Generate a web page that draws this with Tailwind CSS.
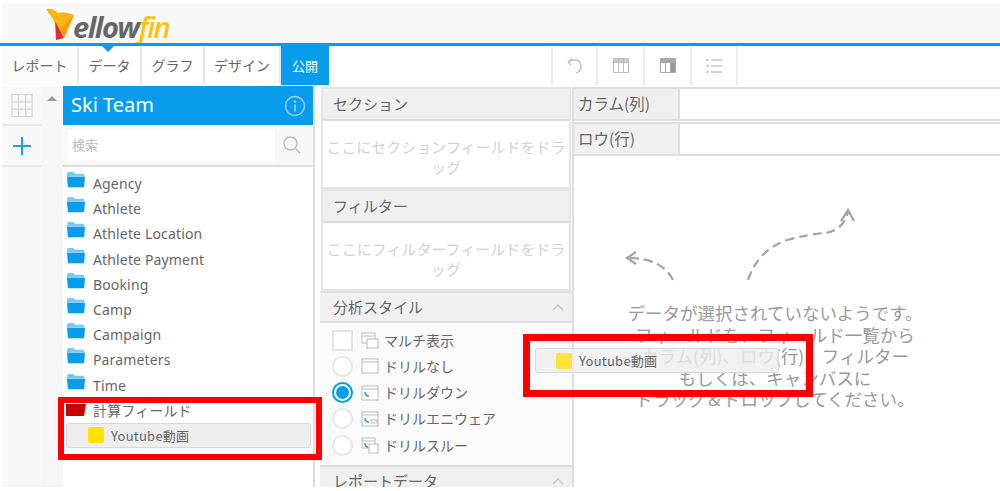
<!DOCTYPE html>
<html lang="ja">
<head>
<meta charset="UTF-8">
<title>Yellowfin</title>
<script src="https://cdn.jsdelivr.net/npm/@tailwindcss/browser@4"></script>
</head>
<body class="bg-white">
<div class="relative w-[1000px] h-[491px] overflow-hidden font-['Noto_Sans_CJK_JP','Noto_Sans',sans-serif] text-[#666]">

  <!-- logo bar -->
  <div class="h-[46px] pt-[3px] bg-white">
    <div class="h-10 ml-[2px] bg-[#f8f8f8] flex items-center pl-[43px]">
      <svg width="32" height="33" viewBox="0 0 32 33" class="mt-[3px]">
        <path d="M1 1 Q8 0 13 5 Q20 3 29 7 L19 30 L15 22 Z" fill="#fbb416"/>
        <path d="M10 13 L15 22 L19 30 L11 32 Z" fill="#e02b3c"/>
        <path d="M29 7 L19 30 L15 22 Z" fill="#f39c12"/>
      </svg>
      <span class="ml-[-4px] mt-[6px] text-[29px] leading-none italic font-bold tracking-[-1.5px] font-['Open_Sans',sans-serif]"><span class="text-[#666]">ellow</span><span class="text-[#fcc30b] font-semibold">fin</span></span>
    </div>
  </div>

  <!-- nav -->
  <div class="relative h-[39px] border-t-[3px] border-[#0a9cec] -mt-[3px] flex text-[14px] box-content">
    <div class="absolute left-[102px] top-0 w-0 h-0 border-x-[6px] border-x-transparent border-t-[6px] border-t-[#0a9cec]"></div>
    <div class="w-[77px] ml-[2px] flex items-center justify-center border-r-2 border-[#e6e6e6] bg-[#fbfbfb]">レポート</div>
    <div class="w-[63px] flex items-center justify-center border-r-2 border-[#e6e6e6]">データ</div>
    <div class="w-[63px] flex items-center justify-center border-r-2 border-[#e6e6e6]">グラフ</div>
    <div class="w-[76px] flex items-center justify-center border-r-2 border-[#e6e6e6]">デザイン</div>
    <div class="w-[48px] flex items-center justify-center bg-[#0a9cec] text-white text-[13px]">公開</div>
    <div class="ml-[222px] flex">
      <div class="w-[47px] flex items-center justify-center border-x-2 border-[#ececec]">
        <svg width="18" height="18" viewBox="0 0 18 18" fill="none" stroke="#c4c4c4" stroke-width="1.5"><path d="M2 5 Q5 3 10 3 Q15 4 15 9 Q15 14 10 16"/><path d="M2 5 L6 1.500 M2 5 L5 8"/></svg>
      </div>
      <div class="w-[47px] flex items-center justify-center border-r-2 border-[#ececec]">
        <svg width="18" height="17" viewBox="0 0 18 17" fill="none" stroke="#bdbdbd"><rect x="1.500" y="1.500" width="15" height="14"/><rect x="1.500" y="1.500" width="15" height="4" fill="#ccc"/><path d="M6.500 1.500V15.500M11.500 1.500V15.500"/></svg>
      </div>
      <div class="w-[47px] flex items-center justify-center border-r-2 border-[#ececec]">
        <svg width="18" height="17" viewBox="0 0 18 17" fill="none" stroke="#a8a8a8"><rect x="1.500" y="1.500" width="15" height="14"/><rect x="1.500" y="1.500" width="15" height="4" fill="#aaa"/><rect x="6.500" y="5.500" width="5" height="10" fill="#fff"/><rect x="11.500" y="5.500" width="5" height="10" fill="#999"/></svg>
      </div>
      <div class="w-[46px] flex items-center justify-center border-r-2 border-[#ececec]">
        <svg width="18" height="16" viewBox="0 0 18 16" fill="none" stroke="#c4c4c4" stroke-width="1.300"><path d="M1 2h3M1 8h3M1 14h3M6 2h11M6 8h11M6 14h11"/></svg>
      </div>
    </div>
  </div>

  <!-- main -->
  <div class="flex h-[401px] mt-[1px] overflow-hidden">
    <!-- rail -->
    <div class="w-[39px] ml-[2px] bg-[#f8f8f8] flex flex-col shrink-0">
      <div class="h-[40px] flex items-center justify-center border-b-2 border-[#e8e8e8]">
        <svg width="22" height="25" viewBox="0 0 24 26" fill="none" stroke="#d6d6d6" stroke-width="1.300"><rect x="1" y="1" width="22" height="24"/><path d="M8 1V25M16 1V25M1 9H23M1 17H23"/></svg>
      </div>
      <div class="h-[41px] flex items-center justify-center border-b-2 border-[#e8e8e8]">
        <svg width="18" height="18" viewBox="0 0 18 18" stroke="#18a0ee" stroke-width="2"><path d="M9 0V18M0 9H18"/></svg>
      </div>
    </div>
    <div class="w-[22px] bg-[#f6f6f6] flex justify-center pt-[10px] shrink-0">
      <div class="w-0 h-0 border-x-[5px] border-x-transparent border-b-[5px] border-b-[#999]"></div>
    </div>

    <!-- field list -->
    <div class="w-[252px] shrink-0 border-r-2 border-[#dedede] bg-white">
      <div class="h-[39px] bg-[#0a9cec] text-white flex items-center justify-between pl-[8px] pr-[7px]">
        <span class="text-[20px] -mt-[2px] font-['Noto_Sans',sans-serif]">Ski Team</span>
        <svg width="22" height="22" viewBox="0 0 22 22" fill="none" stroke="#9ad6f8" stroke-width="1.300"><circle cx="11" cy="11" r="9.500"/><path d="M11 9.500V16.500" stroke-width="1.600"/><circle cx="11" cy="6.500" r="0.600"/></svg>
      </div>
      <div class="h-[42px] flex items-center pl-[5px] pr-[5px] bg-[#f8f8f8] border-b-2 border-[#dedede]">
        <div class="w-[207px] h-[31px] bg-white flex items-center pl-[4px] text-[13px] text-[#bbb]">検索</div>
        <div class="flex-1 flex justify-center">
          <svg width="20" height="20" viewBox="0 0 20 20" fill="none" stroke="#bdbdbd" stroke-width="1.500"><circle cx="8.500" cy="8.500" r="6.500"/><path d="M13.500 13.500L18 18"/></svg>
        </div>
      </div>
      <ul class="pt-[4px] pl-[3px] text-[14px] tracking-[0.15px] text-[#666] font-['Noto_Sans',sans-serif]">
        <li class="h-[25.2px] flex items-center gap-[7px]"><svg class="-mt-[7px]" width="20" height="18" viewBox="0 0 22 20"><path d="M1 3 Q1 1 3 1 H8 L10 3 H20 V6 H1 Z" fill="#7cc8f5"/><path d="M1 6.500 H21 L20 18 H2 Z" fill="#0a9cec"/></svg>Agency</li>
        <li class="h-[25.2px] flex items-center gap-[7px]"><svg class="-mt-[7px]" width="20" height="18" viewBox="0 0 22 20"><path d="M1 3 Q1 1 3 1 H8 L10 3 H20 V6 H1 Z" fill="#7cc8f5"/><path d="M1 6.500 H21 L20 18 H2 Z" fill="#0a9cec"/></svg>Athlete</li>
        <li class="h-[25.2px] flex items-center gap-[7px]"><svg class="-mt-[7px]" width="20" height="18" viewBox="0 0 22 20"><path d="M1 3 Q1 1 3 1 H8 L10 3 H20 V6 H1 Z" fill="#7cc8f5"/><path d="M1 6.500 H21 L20 18 H2 Z" fill="#0a9cec"/></svg>Athlete Location</li>
        <li class="h-[25.2px] flex items-center gap-[7px]"><svg class="-mt-[7px]" width="20" height="18" viewBox="0 0 22 20"><path d="M1 3 Q1 1 3 1 H8 L10 3 H20 V6 H1 Z" fill="#7cc8f5"/><path d="M1 6.500 H21 L20 18 H2 Z" fill="#0a9cec"/></svg>Athlete Payment</li>
        <li class="h-[25.2px] flex items-center gap-[7px]"><svg class="-mt-[7px]" width="20" height="18" viewBox="0 0 22 20"><path d="M1 3 Q1 1 3 1 H8 L10 3 H20 V6 H1 Z" fill="#7cc8f5"/><path d="M1 6.500 H21 L20 18 H2 Z" fill="#0a9cec"/></svg>Booking</li>
        <li class="h-[25.2px] flex items-center gap-[7px]"><svg class="-mt-[7px]" width="20" height="18" viewBox="0 0 22 20"><path d="M1 3 Q1 1 3 1 H8 L10 3 H20 V6 H1 Z" fill="#7cc8f5"/><path d="M1 6.500 H21 L20 18 H2 Z" fill="#0a9cec"/></svg>Camp</li>
        <li class="h-[25.2px] flex items-center gap-[7px]"><svg class="-mt-[7px]" width="20" height="18" viewBox="0 0 22 20"><path d="M1 3 Q1 1 3 1 H8 L10 3 H20 V6 H1 Z" fill="#7cc8f5"/><path d="M1 6.500 H21 L20 18 H2 Z" fill="#0a9cec"/></svg>Campaign</li>
        <li class="h-[25.2px] flex items-center gap-[7px]"><svg class="-mt-[7px]" width="20" height="18" viewBox="0 0 22 20"><path d="M1 3 Q1 1 3 1 H8 L10 3 H20 V6 H1 Z" fill="#7cc8f5"/><path d="M1 6.500 H21 L20 18 H2 Z" fill="#0a9cec"/></svg>Parameters</li>
        <li class="h-[25.2px] flex items-center gap-[7px]"><svg class="-mt-[7px]" width="20" height="18" viewBox="0 0 22 20"><path d="M1 3 Q1 1 3 1 H8 L10 3 H20 V6 H1 Z" fill="#7cc8f5"/><path d="M1 6.500 H21 L20 18 H2 Z" fill="#0a9cec"/></svg>Time</li>
        <li class="h-[25.2px] flex items-center gap-[7px] font-['Noto_Sans_CJK_JP',sans-serif]"><svg width="20" height="14" viewBox="0 0 20 14"><path d="M0 1 H20 L18 13 H0 Z" fill="#c80000"/></svg>計算フィールド</li>
      </ul>
      <div class="ml-[3px] mr-[2px] h-[25px] bg-[#eee] border border-[#d8d8d8] rounded-[3px] flex items-center pl-[21px] gap-[7px] text-[13px] tracking-[0.25px] text-[#666]">
        <span class="w-4 h-4 bg-[#ffe000] rounded-[2px]"></span>Youtube動画
      </div>
    </div>

    <!-- middle column -->
    <div class="w-[252px] ml-[5px] mt-[1px] shrink-0 flex flex-col text-[15px]">
      <div class="h-[102px] mx-[1px] shrink-0 border-2 border-[#e4e4e4] flex flex-col">
        <div class="h-[32px] bg-[#f0f0f0] border-b-2 border-[#dcdcdc] flex items-center pl-[10px] text-[#666]">セクション</div>
        <div class="flex-1 flex items-center justify-center text-center text-[#d2d2d2] leading-[20px] pt-[5px]">ここにセクションフィールドをドラッグ</div>
      </div>
      <div class="h-[102px] mx-[1px] shrink-0 border-2 border-[#e4e4e4] flex flex-col">
        <div class="h-[32px] bg-[#f0f0f0] border-b-2 border-[#dcdcdc] flex items-center pl-[10px] text-[#666]">フィルター</div>
        <div class="flex-1 flex items-center justify-center text-center text-[#d2d2d2] leading-[20px] pt-[5px]">ここにフィルターフィールドをドラッグ</div>
      </div>
      <div class="h-[32px] shrink-0 bg-[#f0f0f0] border-y-2 border-[#dedede] flex items-center justify-between pl-[13px] pr-[8px]">分析スタイル
        <svg width="12" height="8" viewBox="0 0 12 8" fill="none" stroke="#c8c8c8" stroke-width="1.500"><path d="M1 7L6 2L11 7"/></svg>
      </div>
      <div class="h-[142px] shrink-0 bg-[#fafafa] pl-[12px] pt-[4px] text-[14px]">
        <div class="h-[26.25px] flex items-center">
          <span class="w-[21px] h-[21px] bg-white border-2 border-[#e4e4e4] mr-[8px]"></span>
          <svg class="mr-[5px]" width="18" height="18" viewBox="0 0 18 18" fill="#fff" stroke="#bbb"><rect x="1" y="2" width="13" height="10"/><path d="M1 5H14"/><rect x="6" y="8" width="11" height="9"/></svg>マルチ表示
        </div>
        <div class="h-[26.25px] flex items-center">
          <span class="w-[21px] h-[21px] bg-white border-2 border-[#e8e8e8] rounded-full mr-[8px]"></span>
          <svg class="mr-[5px]" width="18" height="18" viewBox="0 0 18 18" fill="#fff" stroke="#bbb"><rect x="1" y="2" width="16" height="14"/><path d="M1 5H17"/></svg>ドリルなし
        </div>
        <div class="h-[26.25px] flex items-center">
          <span class="w-[21px] h-[21px] bg-white border-2 border-[#0a9cec] rounded-full mr-[8px] flex items-center justify-center"><span class="w-[13px] h-[13px] rounded-full bg-[#0a9cec]"></span></span>
          <svg class="mr-[5px]" width="18" height="18" viewBox="0 0 18 18" fill="#fff" stroke="#bbb"><rect x="1" y="2" width="16" height="14"/><path d="M1 5H17"/><path d="M4 8Q4 12 8 12" stroke="#0a9cec" stroke-width="1.500" fill="none"/></svg>ドリルダウン
        </div>
        <div class="h-[26.25px] flex items-center">
          <span class="w-[21px] h-[21px] bg-white border-2 border-[#e8e8e8] rounded-full mr-[8px]"></span>
          <svg class="mr-[5px]" width="18" height="18" viewBox="0 0 18 18" fill="#fff" stroke="#bbb"><rect x="1" y="2" width="16" height="14"/><path d="M1 5H17"/><path d="M4 8Q4 12 8 12" stroke="#0a9cec" stroke-width="1.500" fill="none"/><rect x="10" y="10" width="6" height="3"/></svg>ドリルエニウェア
        </div>
        <div class="h-[26.25px] flex items-center">
          <span class="w-[21px] h-[21px] bg-white border-2 border-[#e8e8e8] rounded-full mr-[8px]"></span>
          <svg class="mr-[5px]" width="18" height="18" viewBox="0 0 18 18" fill="#fff" stroke="#bbb"><rect x="1" y="2" width="13" height="10"/><path d="M1 5H14"/><rect x="8" y="8" width="9" height="9"/><path d="M4 7Q4 11 7 11" stroke="#0a9cec" stroke-width="1.500" fill="none"/></svg>ドリルスルー
        </div>
      </div>
      <div class="h-[30px] shrink-0 bg-[#f0f0f0] border-t-2 border-[#dedede] flex items-center justify-between pl-[13px] pr-[8px]">レポートデータ
        <svg width="12" height="8" viewBox="0 0 12 8" fill="none" stroke="#c8c8c8" stroke-width="1.500"><path d="M1 7L6 2L11 7"/></svg>
      </div>
    </div>

    <!-- canvas -->
    <div class="flex-1 mt-[1px] border-l-2 border-[#dedede] flex flex-col text-[15.5px]">
      <div class="h-[34px] shrink-0 flex border-y-2 border-[#dedede]">
        <div class="w-[106px] bg-[#f0f0f0] border-r-2 border-[#dedede] flex items-center pl-[4px]">カラム(列)</div>
      </div>
      <div class="h-[34px] shrink-0 flex border-y-2 border-[#dedede] mt-[1px]">
        <div class="w-[106px] bg-[#f0f0f0] border-r-2 border-[#dedede] flex items-center pl-[4px]">ロウ(行)</div>
      </div>
      <div class="flex-1">
        <svg class="mt-[44px] ml-[26px]" width="270" height="85" viewBox="0 0 270 85" fill="none" stroke="#a3a3a3" stroke-width="2.200">
          <path d="M73 80 Q62 58 28 58" stroke-dasharray="9 5"/>
          <path d="M36 52 L27 58 L36 64"/>
          <path d="M148 80 Q158 50 187 40 Q210 34 225 33 Q243 31 248 12" stroke-dasharray="9 5"/>
          <path d="M241 21 L248 10 L254 21"/>
        </svg>
        <div class="mt-[17px] pr-[24px] text-center text-[#999] text-[17.5px] leading-[21.5px]">
          データが選択されていないようです。<br>フィールドを、フィールド一覧から<br>カラム(列)、ロウ(行)、フィルター<br>もしくは、キャンバスに<br>ドラッグ＆ドロップしてください。
        </div>
      </div>
    </div>
  </div>

  <!-- drag chip and callouts -->
  <div class="absolute left-[535px] top-[348px] w-[244px] h-[25px] bg-[#eee]/80 border border-[#d8d8d8] rounded-[3px] flex items-center pl-[20px] gap-[7px] text-[13px] tracking-[0.25px] text-[#666]">
    <span class="w-4 h-4 bg-[#ffe23c] rounded-[2px]"></span>Youtube動画
  </div>
  <div class="absolute left-[58px] top-[397px] w-[264px] h-[63px] border-[6px] border-[#f00]"></div>
  <div class="absolute left-[523px] top-[334px] w-[290px] h-[63px] border-[7px] border-[#f00]"></div>
</div>
</body>
</html>
